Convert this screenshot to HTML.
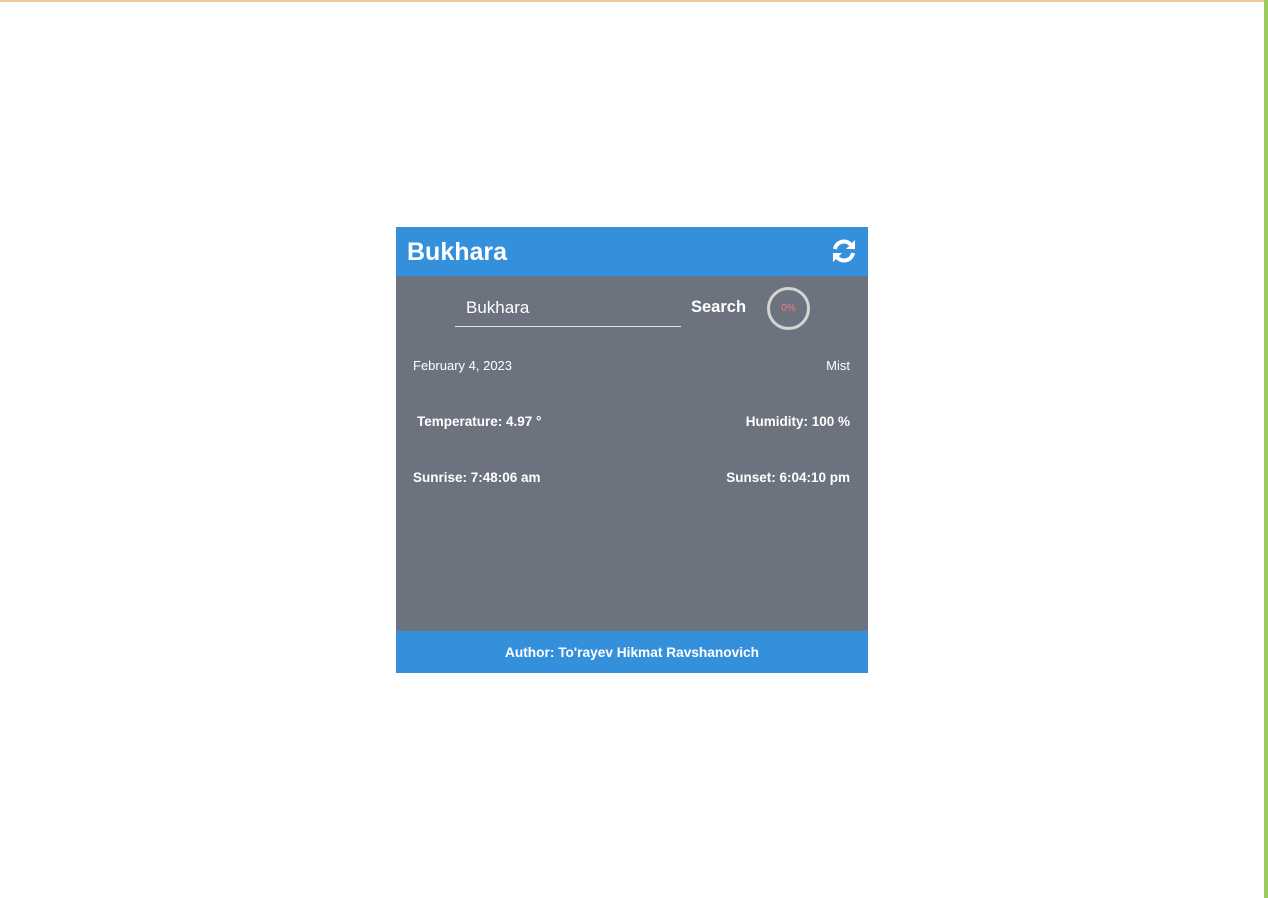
<!DOCTYPE html>
<html><head><style>
html,body{margin:0;padding:0;width:1268px;height:898px;background:#fff;overflow:hidden;font-family:"Liberation Sans",sans-serif;position:relative}
.top{position:absolute;left:0;top:0;width:1264px;height:2px;background:#f0c896}
.green{position:absolute;right:0;top:0;width:4px;height:898px;background:#9cc95c}
.card{position:absolute;left:396px;top:227px;width:472px;height:446px;background:#6c727e;color:#fff}
.hd{height:49px;background:#3590dc;position:relative}
.hd h1{margin:0;position:absolute;left:11px;top:11px;font-size:25px;font-weight:bold}
.hd svg{position:absolute;right:11px;top:11px}
.in{position:absolute;left:59px;top:70px;width:226px;height:30px;border-bottom:1px solid #e6e6e6;font-size:17px;padding-left:11px;line-height:22px;box-sizing:border-box}
.sb{position:absolute;left:691px;left:295px;top:71px;font-size:16.5px;font-weight:bold}
.circ{position:absolute;left:371px;top:60px;width:37px;height:37px;border:3px solid #d4d4d4;border-radius:50%;color:#f37c85;font-size:10px;text-align:center;line-height:37px}
.t{position:absolute;font-size:13.5px}
.b{font-weight:bold}
.ft{position:absolute;left:0;bottom:0;width:472px;height:42px;background:#3590dc;text-align:center;line-height:44px;font-size:13.7px;font-weight:bold}
</style></head><body>
<div class="top"></div><div class="green"></div>
<div class="card">
<div class="hd"><h1>Bukhara</h1>
<svg width="26" height="26" viewBox="0 0 26 26" fill="none" stroke="#fff" stroke-width="4"><path d="M4 11 A9 9 0 0 1 20 7"/><path d="M22 15 A9 9 0 0 1 6 19"/><path d="M24 2 V11 H15" fill="#fff" stroke-width="0"/><path d="M2 24 V15 H11" fill="#fff" stroke-width="0"/></svg>
</div>
<div class="in">Bukhara</div>
<div class="sb">Search</div>
<div class="circ">0%</div>
<div class="t" style="left:17px;top:131px;font-size:13px">February 4, 2023</div>
<div class="t" style="right:18px;top:131px;font-size:13px">Mist</div>
<div class="t b" style="left:21px;top:187px">Temperature: 4.97 °</div>
<div class="t b" style="right:18px;top:187px">Humidity: 100 %</div>
<div class="t b" style="left:17px;top:243px">Sunrise: 7:48:06 am</div>
<div class="t b" style="right:18px;top:243px">Sunset: 6:04:10 pm</div>
<div class="ft">Author: To'rayev Hikmat Ravshanovich</div>
</div>
</body></html>
